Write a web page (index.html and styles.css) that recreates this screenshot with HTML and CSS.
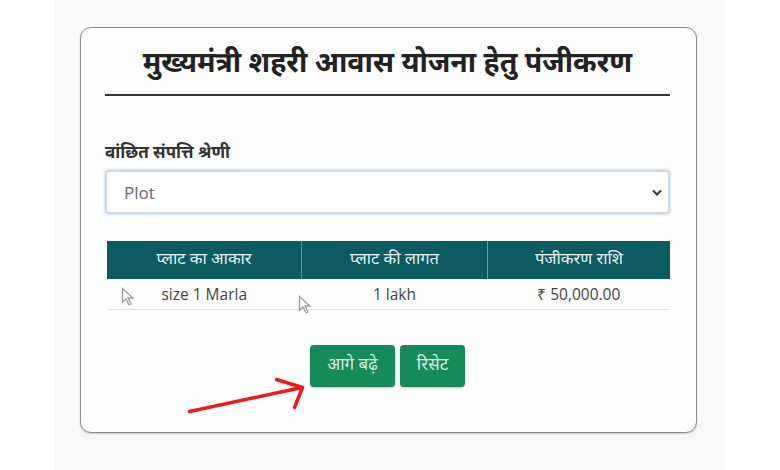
FILE: index.html
```html
<!DOCTYPE html>
<html lang="hi">
<head>
<meta charset="utf-8">
<link rel="stylesheet" href="styles.css">
</head>
<body>
<div class="page">
  <div class="card">
    <h1 class="title">मुख्यमंत्री शहरी आवास योजना हेतु पंजीकरण</h1>
    <div class="rule"></div>
    <label class="label">वांछित संपत्ति श्रेणी</label>
    <div class="select">
      <span class="select-text">Plot</span>
      <svg class="chev" width="10" height="7" viewBox="0 0 10 7"><path d="M1 1.5 L5 5.5 L9 1.5" fill="none" stroke="#333" stroke-width="2"/></svg>
    </div>
    <table class="tbl">
      <thead>
        <tr><th>प्लाट का आकार</th><th>प्लाट की लागत</th><th>पंजीकरण राशि</th></tr>
      </thead>
      <tbody>
        <tr><td>size 1 Marla</td><td>1 lakh</td><td>₹ 50,000.00</td></tr>
      </tbody>
    </table>
    <div class="actions">
      <button class="btn">आगे बढ़े</button>
      <button class="btn">रिसेट</button>
    </div>
    <svg class="cursor c1" width="14" height="20" viewBox="0 0 14 20"><path d="M1.5 1.5 L1.5 15 L5 12 L8 18 L10 17 L7 11 L12 11 Z" fill="#fff" stroke="#999" stroke-width="1.3"/></svg>
    <svg class="cursor c2" width="14" height="20" viewBox="0 0 14 20"><path d="M1.5 1.5 L1.5 15 L5 12 L8 18 L10 17 L7 11 L12 11 Z" fill="#fff" stroke="#999" stroke-width="1.3"/></svg>
    <svg class="arrow" width="130" height="45" viewBox="0 0 130 45"><path d="M8.5 38.5 L121 14.5" stroke="#f01818" stroke-width="3.5" fill="none" stroke-linecap="round"/><path d="M95.5 6.5 L121.5 14.5 L113.5 34.5" stroke="#f01818" stroke-width="3.5" fill="none" stroke-linecap="round" stroke-linejoin="round"/></svg>
  </div>
</div>
</body>
</html>
```
FILE: styles.css
```css
html, body {
  margin: 0;
  padding: 0;
  background: #ffffff;
}
.page {
  width: 670px;
  height: 470px;
  margin-left: 55px;
  background: #f8f8f8;
  padding-top: 27px;
  box-sizing: border-box;
}
.card {
  position: relative;
  margin-left: 25px;
  width: 617px;
  height: 406px;
  box-sizing: border-box;
  border: 1.5px solid #8a8a8a;
  border-radius: 11px;
  background: #fdfdfd;
  padding: 16px 26px 0 24px;
  box-shadow: 0 1px 2px rgba(0,0,0,0.2);
  font-family: "Noto Sans Devanagari", "Lohit Devanagari", "Noto Sans", sans-serif;
}
.title {
  margin: 0;
  text-align: center;
  font-size: 28.5px;
  font-weight: bold;
  color: #222;
  line-height: 42px;
}
.rule {
  margin-top: 8px;
  height: 2px;
  background: #333;
}
.label {
  display: block;
  margin-top: 46px;
  font-size: 17px;
  font-weight: bold;
  color: #333;
  line-height: 24px;
}
.select {
  margin-top: 4px;
  height: 44px;
  box-sizing: border-box;
  border: 2px solid #c6d8ea;
  border-radius: 4px;
  background: #fff;
  box-shadow: 0 0 2px 1px rgba(170,200,225,0.5);
  display: flex;
  align-items: center;
  justify-content: space-between;
  padding: 0 6px 0 17px;
}
.select-text {
  font-family: "Open Sans", sans-serif;
  font-size: 17px;
  color: #666;
}
.tbl {
  margin-top: 27px;
  margin-left: 2px;
  width: 563px;
  border-collapse: collapse;
}
.tbl th {
  background: #0c5b61;
  color: #e8f2f2;
  font-weight: normal;
  font-size: 16.5px;
  height: 38px;
  padding: 0;
  border-left: 1px solid #5fa5a8;
}
.tbl th:first-child { border-left: none; width: 194px; }
.tbl th:nth-child(2) { width: 185px; }
.tbl td {
  font-family: "Open Sans", sans-serif;
  font-size: 15.5px;
  color: #444;
  text-align: center;
  height: 30px;
  padding: 0;
  border-bottom: 1px solid #e2e2e2;
}
.actions {
  display: flex;
  justify-content: center;
  gap: 5px;
  margin-top: 35px;
}
.btn {
  height: 42px;
  border: none;
  border-radius: 4px;
  background: #168a58;
  color: #d8efe2;
  font-family: inherit;
  font-size: 17px;
  padding: 0 10px;
  box-shadow: 0 1px 2px rgba(0,0,0,0.25);
}
.btn:first-child { width: 85px; }
.btn:last-child { width: 65px; }
.cursor { position: absolute; }
.c1 { left: 40px; top: 259px; }
.c2 { left: 217px; top: 267px; }
.arrow { position: absolute; left: 100px; top: 345px; }
```
